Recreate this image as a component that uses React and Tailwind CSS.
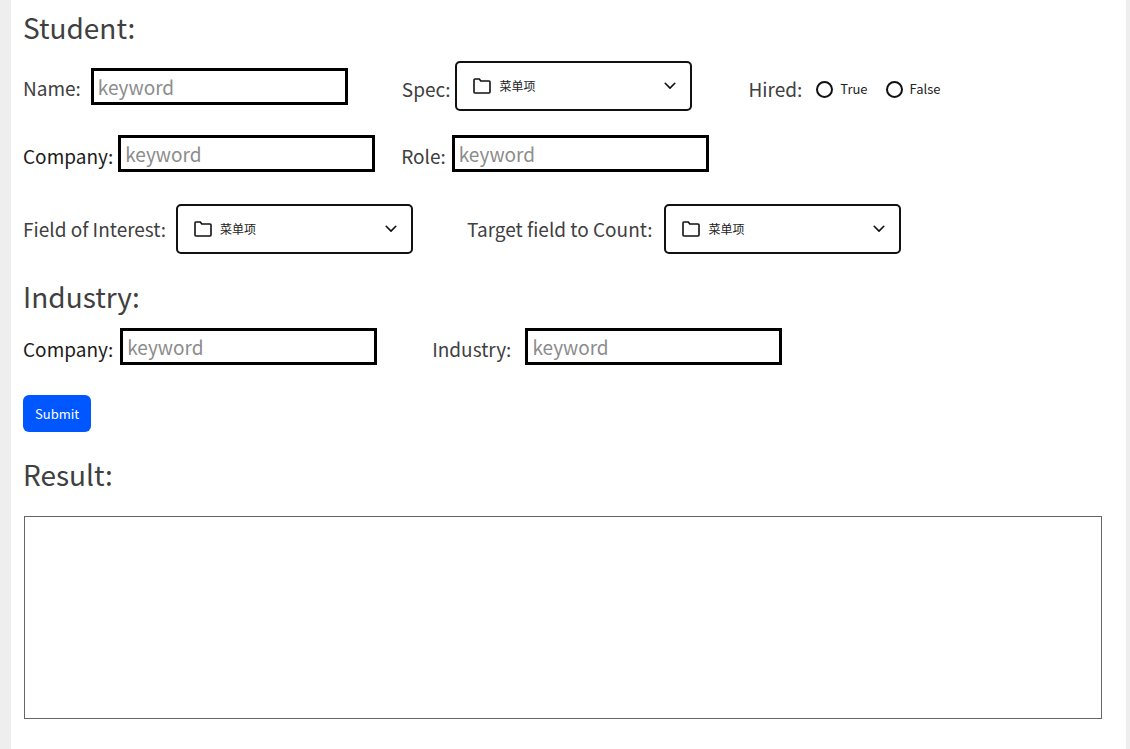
import { useId } from "react";

function TextField({ label, className = "gap-2", labelClassName = "text-[#404040]" }) {
  const id = useId();
  return (
    <div className={`flex items-center ${className}`}>
      <label htmlFor={id} className={`shrink-0 pt-1 text-[19px] leading-7 ${labelClassName}`}>
        {label}
      </label>
      <input
        id={id}
        type="text"
        placeholder="keyword"
        className="h-[37px] w-[257px] border-3 border-black bg-white px-1 text-[19px] text-black outline-none placeholder:text-[#8c8c8c] placeholder:opacity-100"
      />
    </div>
  );
}

function FolderIcon() {
  return (
    <svg viewBox="0 0 18 16" className="h-4 w-[18px] shrink-0" fill="none" stroke="#111" strokeWidth="1.6" strokeLinejoin="round" aria-hidden="true">
      <path d="M1 2C1 1.3 1.4 1 2 1H6.3L7.8 3H16C16.7 3 17 3.4 17 4V14C17 14.7 16.7 15 16 15H2C1.3 15 1 14.7 1 14Z" />
    </svg>
  );
}

function ChevronIcon() {
  return (
    <svg viewBox="0 0 12 8" className="h-2 w-3 shrink-0" fill="none" stroke="#111" strokeWidth="1.6" strokeLinecap="round" strokeLinejoin="round" aria-hidden="true">
      <path d="M1.2 1.3L6 6.1L10.8 1.3" />
    </svg>
  );
}

function SelectField({ label, className = "gap-2", labelClassName = "" }) {
  const id = useId();
  return (
    <div className={`flex items-center ${className}`}>
      <label htmlFor={id} className={`shrink-0 text-[19px] leading-7 text-[#404040] ${labelClassName}`}>
        {label}
      </label>
      <div className="flex h-[50px] w-[237px] items-center gap-2 rounded-[5px] border-2 border-[#111] bg-white pr-3.5 pl-4">
        <FolderIcon />
        <select id={id} className="min-w-0 flex-1 appearance-none bg-transparent text-xs text-[#222] outline-none">
          <option>菜单项</option>
        </select>
        <ChevronIcon />
      </div>
    </div>
  );
}

function Radio({ label }) {
  return (
    <label className="flex items-center gap-[7px] text-[13px] leading-5 text-[#222]">
      <input
        type="radio"
        name="hired"
        value={label}
        className="size-[17px] appearance-none rounded-full border-2 border-[#111] checked:bg-[#0057ff]"
      />
      {label}
    </label>
  );
}

function Heading({ children }) {
  return <h2 className="text-[28px] leading-11 text-[#404040]">{children}</h2>;
}

export default function App() {
  return (
    <div className="min-h-screen bg-[#eee] pr-1 pl-[11px] font-['Noto_Sans_CJK_SC',sans-serif]">
      <main className="min-h-screen bg-white pt-[5px] pr-6 pb-7 pl-3">
        <form onSubmit={(e) => e.preventDefault()}>
          <Heading>Student:</Heading>
          <div className="mt-3 flex items-center">
            <TextField label="Name:" className="gap-2.5" />
            <SelectField label="Spec:" className="ml-[54px] gap-[5px]" labelClassName="pt-1.5" />
            <fieldset className="ml-14 flex items-center gap-3.5 pt-0.5">
              <legend className="float-left pt-1 text-[19px] leading-7 text-[#404040]">Hired:</legend>
              <div className="flex gap-[18px] pt-1">
                <Radio label="True" />
                <Radio label="False" />
              </div>
            </fieldset>
          </div>
          <div className="mt-6 flex items-center">
            <TextField label="Company:" className="gap-[5px]" labelClassName="text-[#1c1c1c]" />
            <TextField label="Role:" className="ml-[26px] gap-1.5" />
          </div>
          <div className="mt-8 flex items-center">
            <SelectField label="Field of Interest:" className="gap-2.5" />
            <SelectField label="Target field to Count:" className="ml-[54px] gap-3" />
          </div>
          <div className="mt-5">
            <Heading>Industry:</Heading>
          </div>
          <div className="mt-2.5 flex items-center">
            <TextField label="Company:" className="gap-[7px]" labelClassName="text-[#1c1c1c]" />
            <TextField label="Industry:" className="ml-[55px] gap-3.5" />
          </div>
          <button type="submit" className="mt-[30px] block h-[37px] rounded-md bg-[#0057ff] px-3 text-[13px] text-white">
            Submit
          </button>
        </form>
        <section className="mt-5">
          <Heading>Result:</Heading>
          <output aria-label="Result" className="mt-5 ml-px block h-[203px] border border-[#666] bg-white" />
        </section>
      </main>
    </div>
  );
}
